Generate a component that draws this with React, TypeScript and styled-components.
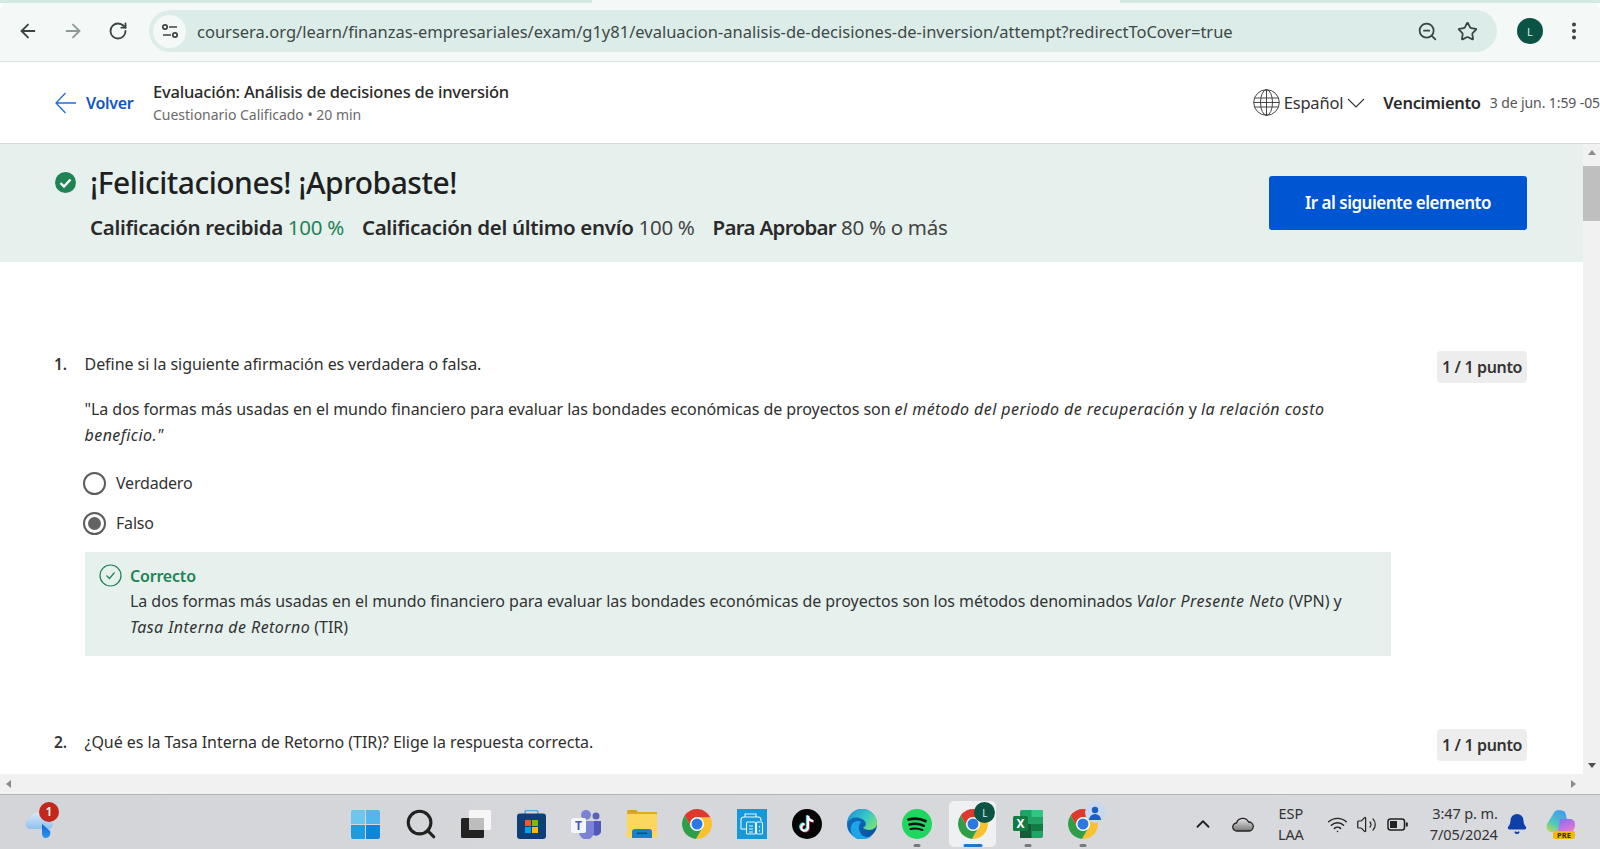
import React from "react";
import styled, { createGlobalStyle } from "styled-components";
import { ArrowLeft, ArrowRight, RotateCw, ZoomOut, Star, EllipsisVertical, ChevronUp, Search, Wifi, Volume2, Bell } from "lucide-react";

const FONT = `"Noto Sans", "Open Sans", sans-serif`;

const GlobalStyle = createGlobalStyle`
  html, body { margin: 0; padding: 0; overflow: hidden; background: #fff; }
  * { box-sizing: border-box; }
  body { font-family: ${FONT}; color: #1f1f1f; }
`;

const Screen = styled.div`
  width: 1600px;
  height: 849px;
  display: flex;
  flex-direction: column;
  overflow: hidden;
`;

const TabStrip = styled.div`
  height: 3px;
  flex: none;
  background: linear-gradient(90deg, #d3eae4 0 37%, #f4f9f8 37% 70%, #d3eae4 70%);
`;

const Toolbar = styled.div`
  height: 59px;
  flex: none;
  display: flex;
  align-items: center;
  padding: 0 12px 2px 5px;
  background: #f4f9f8;
  border-bottom: 1px solid #d9e4e1;
  border-radius: 8px 8px 0 0;
`;

const NavButton = styled.span<{ $muted?: boolean }>`
  width: 45px;
  display: flex;
  justify-content: center;
  color: ${(p) => (p.$muted ? "#8f9a98" : "#3a4442")};
`;

const AddressBar = styled.div`
  width: 1348px;
  height: 42px;
  margin-left: 9px;
  display: flex;
  align-items: center;
  padding: 0 19px 0 4px;
  border-radius: 21px;
  background: #dcece8;
`;

const SiteBadge = styled.span`
  width: 33px;
  height: 33px;
  flex: none;
  display: flex;
  align-items: center;
  justify-content: center;
  border-radius: 50%;
  background: #f4f9f8;
`;

const Url = styled.span`
  flex: 1;
  margin-left: 11px;
  font-size: 16.5px;
  color: #3f4947;
  white-space: nowrap;
`;

const AddressIcons = styled.span`
  display: flex;
  align-items: center;
  gap: 19px;
  color: #3a4442;
`;

const Avatar = styled.span`
  width: 26px;
  height: 26px;
  flex: none;
  display: flex;
  align-items: center;
  justify-content: center;
  border-radius: 50%;
  background: #0b5345;
  color: #d9efe9;
  font-size: 11px;
`;

const ProfileSlot = styled.span`
  margin-left: 20px;
  display: flex;
  align-items: center;
  gap: 20px;
  color: #3a4442;
`;

const PageHeader = styled.header`
  height: 82px;
  flex: none;
  display: flex;
  align-items: center;
  padding: 0 0 0 55px;
  background: #fff;
  border-bottom: 1px solid #d8d8d8;
`;

const BackLink = styled.a`
  display: flex;
  align-items: center;
  gap: 10px;
  width: 98px;
  color: #0f56c4;
  font-size: 16px;
  font-weight: 600;
  letter-spacing: -0.3px;
`;

const HeaderTitle = styled.div`
  flex: 1;
  display: flex;
  flex-direction: column;
  gap: 3px;
`;

const CourseTitle = styled.div`
  font-size: 16.5px;
  font-weight: 500;
  letter-spacing: -0.2px;
  line-height: 22px;
  color: #2a2a2a;
`;

const CourseMeta = styled.div`
  font-size: 14px;
  letter-spacing: -0.02px;
  line-height: 18px;
  color: #6a6a6a;
`;

const HeaderRight = styled.div`
  display: flex;
  align-items: center;
  white-space: nowrap;
`;

const Language = styled.span`
  display: flex;
  align-items: center;
  gap: 4px;
  font-size: 16.5px;
  letter-spacing: -0.2px;
  color: #333;
  margin-right: 18px;
`;

const DueLabel = styled.span`
  font-size: 16.5px;
  font-weight: 600;
  letter-spacing: -0.3px;
  color: #2a2a2a;
`;

const DueValue = styled.span`
  margin-left: 9px;
  font-size: 14px;
  letter-spacing: -0.1px;
  color: #555;
`;

const Body = styled.div`
  flex: 1;
  min-height: 0;
  display: flex;
`;

const Scroller = styled.main`
  flex: 1;
  min-width: 0;
  overflow: hidden;
`;

const VerticalBar = styled.div`
  width: 17px;
  flex: none;
  display: flex;
  flex-direction: column;
  align-items: center;
  justify-content: space-between;
  background: #f1f1f1;
  position: relative;
`;

const Thumb = styled.span`
  position: absolute;
  top: 22px;
  left: 0;
  width: 100%;
  height: 55px;
  background: #bfbfbf;
`;

const Arrow = styled.span<{ $dir: "up" | "down" | "left" | "right" }>`
  width: 0;
  height: 0;
  margin: 6px 0;
  border: 4px solid transparent;
  ${(p) => p.$dir === "up" && "border-bottom: 5px solid #8a8a8a; border-top-width: 0;"}
  ${(p) => p.$dir === "down" && "border-top: 5px solid #505050; border-bottom-width: 0;"}
  ${(p) => p.$dir === "left" && "border-right: 5px solid #8a8a8a; border-left-width: 0;"}
  ${(p) => p.$dir === "right" && "border-left: 5px solid #8a8a8a; border-right-width: 0;"}
`;

const Banner = styled.section`
  height: 118px;
  display: flex;
  align-items: center;
  justify-content: space-between;
  padding: 0 56px 0 55px;
  background: #e6f1ee;
`;

const BannerLeft = styled.div`
  display: flex;
  flex-direction: column;
  gap: 10px;
  margin-bottom: 3px;
`;

const BannerTitle = styled.h1`
  margin: 0;
  display: flex;
  align-items: center;
  gap: 14px;
  font-size: 30px;
  line-height: 40px;
  font-weight: 500;
  letter-spacing: -0.5px;
  color: #1f1f1f;
`;

const Scores = styled.div`
  display: flex;
  gap: 18px;
  padding-left: 35px;
  font-size: 20.5px;
  line-height: 28px;
  letter-spacing: -0.3px;
  color: #444;
`;

const ScoreLabel = styled.b<{ $tight?: boolean }>`
  font-weight: 600;
  letter-spacing: ${(p) => (p.$tight ? "-0.7px" : "-0.32px")};
  color: #2a2a2a;
`;

const ScoreValue = styled.span<{ $good?: boolean }>`
  color: ${(p) => (p.$good ? "#1f8354" : "#444")};
`;

const NextButton = styled.button`
  width: 258px;
  height: 54px;
  padding: 0 0 2px;
  border: none;
  border-radius: 3px;
  background: #0056d2;
  color: #fff;
  font-family: ${FONT};
  font-size: 17px;
  font-weight: 600;
  letter-spacing: -0.5px;
`;

const Quiz = styled.div`
  padding: 89px 56px 0 54px;
  display: flex;
  flex-direction: column;
  gap: 73px;
`;

const Question = styled.article`
  display: grid;
  grid-template-columns: 30.5px 1fr 90px;
`;

const QuestionNumber = styled.div`
  font-size: 15.5px;
  font-weight: 600;
  line-height: 26px;
  color: #333;
`;

const Prompt = styled.div`
  max-width: 1306px;
  font-size: 16px;
  line-height: 26px;
  letter-spacing: -0.05px;
  color: #2f2f2f;

  p {
    margin: 0 0 19px;
  }

  p + p {
    margin-bottom: 23px;
  }

  em {
    letter-spacing: 0.44px;
  }
`;

const Points = styled.div`
  height: 32px;
  display: flex;
  align-items: center;
  justify-content: center;
  border-radius: 4px;
  background: #ededed;
  font-size: 16px;
  font-weight: 600;
  letter-spacing: -0.35px;
  color: #333;
`;

const Option = styled.label`
  display: flex;
  align-items: center;
  gap: 10px;
  height: 24px;
  margin: 0 0 16px -1.5px;
  font-size: 16px;
  letter-spacing: -0.2px;
  color: #333;
`;

const Radio = styled.span<{ $checked?: boolean }>`
  width: 23px;
  height: 23px;
  display: flex;
  align-items: center;
  justify-content: center;
  border-radius: 50%;
  border: 2px solid #5c5c5c;

  &::after {
    content: "";
    display: ${(p) => (p.$checked ? "block" : "none")};
    width: 13px;
    height: 13px;
    border-radius: 50%;
    background: #636363;
  }
`;

const Feedback = styled.div`
  height: 104px;
  margin-top: 17px;
  padding: 12px 40px 0 14.5px;
  display: grid;
  grid-template-columns: 31px 1fr;
  background: #e6f1ee;
`;

const FeedbackTitle = styled.div`
  font-size: 16px;
  font-weight: 600;
  line-height: 24px;
  letter-spacing: -0.2px;
  color: #1f8354;
`;

const FeedbackText = styled.div`
  font-size: 16px;
  line-height: 26px;
  letter-spacing: -0.05px;
  color: #333;
`;

const HorizontalBar = styled.div`
  height: 21px;
  flex: none;
  display: flex;
  align-items: center;
  justify-content: space-between;
  padding: 0 24px 0 6px;
  background: #f1f1f1;
  border-bottom: 1px solid #b5b5b5;
`;

const Taskbar = styled.footer`
  height: 54px;
  flex: none;
  display: flex;
  align-items: center;
  padding: 6px 0 2px 25px;
  background: linear-gradient(90deg, #d4d5d9, #d8dade);
`;

const CloudSlot = styled.span`
  position: relative;
  width: 31px;
  display: flex;
`;

const NotificationDot = styled.span`
  position: absolute;
  top: -9px;
  left: 14px;
  width: 20px;
  height: 20px;
  display: flex;
  align-items: center;
  justify-content: center;
  border-radius: 50%;
  background: #c4281c;
  color: #fff;
  font-size: 12px;
  font-weight: 600;
`;

const AppGroup = styled.div`
  margin-left: 282px;
  display: flex;
  align-items: center;
`;

const AppSlot = styled.span<{ $active?: boolean; $running?: boolean }>`
  position: relative;
  width: 55.2px;
  height: 46px;
  display: flex;
  align-items: center;
  justify-content: center;
  border-radius: 5px;

  &::before {
    content: "";
    display: ${(p) => (p.$active ? "block" : "none")};
    position: absolute;
    inset: 0 4px;
    border-radius: 5px;
    background: #eef0f1;
  }

  & > * {
    position: relative;
  }

  &::after {
    content: "";
    display: ${(p) => (p.$active || p.$running ? "block" : "none")};
    position: absolute;
    bottom: 0;
    left: 50%;
    transform: translateX(-50%);
    width: ${(p) => (p.$active ? 19 : 7)}px;
    height: 3px;
    border-radius: 2px;
    background: ${(p) => (p.$active ? "#1a78d8" : "#77797c")};
  }
`;

const Tray = styled.div`
  margin-left: 77.2px;
  display: flex;
  align-items: center;
  color: #222;
`;

const TrayIcon = styled.span<{ $w: number; $gap?: number }>`
  width: ${(p) => p.$w}px;
  margin-left: ${(p) => p.$gap ?? 0}px;
  display: flex;
  justify-content: center;
`;

const TrayText = styled.div<{ $w: number; $align?: string }>`
  width: ${(p) => p.$w}px;
  font-size: 14.5px;
  line-height: 21px;
  letter-spacing: -0.1px;
  text-align: ${(p) => p.$align ?? "center"};
  color: #333;
`;

const ProfileBubble = styled.span<{ $light?: boolean }>`
  position: absolute !important;
  top: 1px;
  right: 5px;
  width: 21px;
  height: 21px;
  display: flex;
  align-items: center;
  justify-content: center;
  border-radius: 50%;
  background: ${(p) => (p.$light ? "#c9d8ee" : "#0b5345")};
  color: #d9efe9;
  font-size: 10px;
`;

const BackArrow = () => (
  <svg width="21" height="22" viewBox="0 0 21 22" fill="none" stroke="#1f6fd6" strokeWidth="1.3">
    <path d="M10.500 1L1 11L10.500 21M1 11H21" />
  </svg>
);

const GlobeIcon = () => (
  <svg width="27" height="27" viewBox="0 0 27 27" fill="none" stroke="#333" strokeWidth="0.9">
    <circle cx="13.500" cy="13.500" r="12.800" />
    <ellipse cx="13.500" cy="13.500" rx="6" ry="12.800" />
    <path d="M13.500 .7V26.300M1.500 9H25.500M.7 13.500H26.300M1.500 18H25.500" />
  </svg>
);

const ThinChevron = () => (
  <svg width="18" height="10" viewBox="0 0 18 10" fill="none" stroke="#333" strokeWidth="1.100">
    <path d="M1 1L9 9L17 1" />
  </svg>
);

const SiteInfoIcon = () => (
  <svg width="18" height="18" viewBox="0 0 18 18" fill="none" stroke="#3a4442" strokeWidth="1.700">
    <path d="M8 5H16M2 13H10" />
    <circle cx="4" cy="5" r="2.200" />
    <circle cx="14" cy="13" r="2.200" />
  </svg>
);

const PassedIcon = () => (
  <svg width="21" height="21" viewBox="0 0 21 21">
    <circle cx="10.500" cy="10.500" r="10.500" fill="#1f8354" />
    <path d="M5.500 11L9 14.500L15.500 7.500" fill="none" stroke="#fff" strokeWidth="2.400" />
  </svg>
);

const OutlineCheck = () => (
  <svg width="23" height="23" viewBox="0 0 23 23" fill="none" stroke="#1f8354">
    <circle cx="11.500" cy="11.500" r="10.500" strokeWidth="1.200" />
    <path d="M7.500 11.500L10.500 14.500L15.500 8.500" strokeWidth="1.200" />
  </svg>
);

const OneDriveAlert = () => (
  <svg width="31" height="27" viewBox="0 0 31 27">
    <defs>
      <linearGradient id="cloudFill" x1="0" y1="0" x2="0" y2="1">
        <stop offset="0" stopColor="#d8e8f8" />
        <stop offset="1" stopColor="#8fc0ee" />
      </linearGradient>
      <linearGradient id="dropFill" x1="0" y1="0" x2="0" y2="1">
        <stop offset="0" stopColor="#0f5fd0" />
        <stop offset="1" stopColor="#2b9bf4" />
      </linearGradient>
    </defs>
    <path d="M6 18a5 5 0 0 1-1-10 9 9 0 0 1 17-1 6 6 0 0 1 3 11Z" fill="url(#cloudFill)" />
    <path d="M17 13l8 7c1 4-1 7-4 7s-4-2-4-5Z" fill="url(#dropFill)" />
  </svg>
);

const StartIcon = () => (
  <svg width="29" height="29" viewBox="0 0 29 29">
    <path d="M0 2a2 2 0 0 1 2-2H14V14H0Z" fill="#6cc6ee" />
    <path d="M15 0H27a2 2 0 0 1 2 2V14H15Z" fill="#54b6ea" />
    <path d="M0 15H14V29H2a2 2 0 0 1-2-2Z" fill="#1f9be0" />
    <path d="M15 15H29V27a2 2 0 0 1-2 2H15Z" fill="#0f86d8" />
  </svg>
);

const TaskViewIcon = () => (
  <svg width="30" height="28" viewBox="0 0 30 28">
    <rect x="8" y="0" width="22" height="20" rx="1.500" fill="#f6f6f6" />
    <rect x="0" y="8" width="23" height="20" rx="1.500" fill="#222" />
    <rect x="8" y="8" width="15" height="12" fill="#bdbdbd" />
  </svg>
);

const StoreIcon = () => (
  <svg width="29" height="29" viewBox="0 0 29 29">
    <path d="M8 5V2.500a2 2 0 0 1 2-2h9a2 2 0 0 1 2 2V5" fill="none" stroke="#4aa9e0" strokeWidth="1.500" />
    <rect x="0" y="3.500" width="29" height="25.500" rx="3" fill="#0f3f78" />
    <rect x="8" y="10" width="6" height="6" fill="#f05a28" />
    <rect x="15" y="10" width="6" height="6" fill="#7fba00" />
    <rect x="8" y="17" width="6" height="6" fill="#00a4ef" />
    <rect x="15" y="17" width="6" height="6" fill="#ffb900" />
  </svg>
);

const TeamsIcon = () => (
  <svg width="30" height="29" viewBox="0 0 30 29">
    <circle cx="15" cy="5" r="5" fill="#7b83d6" />
    <circle cx="25" cy="6" r="3.500" fill="#5a62c0" />
    <path d="M20 11h10v8a5 5 0 0 1-10 3Z" fill="#5059b8" />
    <path d="M8 11h15v11a7 7 0 0 1-15 0Z" fill="#7b83d6" />
    <rect x="0" y="8" width="15" height="15" rx="2" fill="#f4f6ff" />
    <text x="7.500" y="20" textAnchor="middle" fontSize="12" fontWeight="700" fontFamily={FONT} fill="#4b53bc">T</text>
  </svg>
);

const FolderIcon = () => (
  <svg width="30" height="28" viewBox="0 0 30 28">
    <path d="M0 2a2 2 0 0 1 2-2h7l3 3H0Z" fill="#d4a017" />
    <rect x="0" y="2" width="30" height="4" fill="#e0ab1a" />
    <rect x="0" y="4" width="30" height="24" rx="1" fill="#fbd75b" />
    <path d="M5 28v-6a3 3 0 0 1 3-3h14a3 3 0 0 1 3 3v6Z" fill="#1d7fc4" />
    <rect x="10" y="22.500" width="10" height="1.600" fill="#0d4e80" />
  </svg>
);

const ChromeIcon = () => (
  <svg width="30" height="30" viewBox="1 1 30 30">
    <path d="M16 16L10.370 19.250L3.620 7.560A15 15 0 0 1 29.500 9.500L16 9.500Z" fill="#dd3a2d" />
    <path d="M16 16L16 9.500L29.500 9.500A15 15 0 0 1 14.880 30.940L21.630 19.250Z" fill="#fbc02d" />
    <path d="M16 16L21.630 19.250L14.880 30.940A15 15 0 0 1 3.620 7.560L10.370 19.250Z" fill="#2f9e48" />
    <circle cx="16" cy="16" r="7" fill="#fff" />
    <circle cx="16" cy="16" r="5.500" fill="#2a78e0" />
  </svg>
);

const PrinterIcon = () => (
  <svg width="30" height="30" viewBox="0 0 30 30">
    <rect width="30" height="30" fill="#1798da" />
    <g fill="none" stroke="#e4f6ff" strokeWidth="1.100">
      <path d="M8 8V5h11v3M4 20v-9a3 3 0 0 1 3-3h14a3 3 0 0 1 3 3v1" />
      <path d="M4 20h5" />
      <rect x="9.500" y="13" width="9" height="12" rx="1" />
      <rect x="19.500" y="13" width="6" height="12" rx="1" />
      <path d="M12 17h4M12 20h4M12 23h4M22.500 17v1.500M22.500 21v1.500" />
    </g>
  </svg>
);

const TikTokIcon = () => (
  <svg width="30" height="30" viewBox="0 0 31 31">
    <circle cx="15.500" cy="15.500" r="15.500" fill="#050505" />
    <path d="M16.500 7v12a3.500 3.500 0 1 1-3.500-3.500M16.500 7c.3 3 2 5 5.500 5.500" fill="none" stroke="#25e4e0" strokeWidth="2.400" transform="translate(-1 -.6)" />
    <path d="M16.500 7v12a3.500 3.500 0 1 1-3.500-3.500M16.500 7c.3 3 2 5 5.500 5.500" fill="none" stroke="#fe2c55" strokeWidth="2.400" transform="translate(.6 .6)" />
    <path d="M16.500 7v12a3.500 3.500 0 1 1-3.500-3.500M16.500 7c.3 3 2 5 5.500 5.500" fill="none" stroke="#fff" strokeWidth="2.200" />
  </svg>
);

const EdgeIcon = () => (
  <svg width="30" height="30" viewBox="0 0 30 30">
    <defs>
      <linearGradient id="edgeTop" x1="0" y1="0" x2="1" y2="0.600">
        <stop offset="0" stopColor="#1a8fd8" />
        <stop offset="0.600" stopColor="#35c6c8" />
        <stop offset="1" stopColor="#6fe07f" />
      </linearGradient>
      <linearGradient id="edgeBase" x1="0" y1="0" x2="1" y2="1">
        <stop offset="0" stopColor="#0f72c4" />
        <stop offset="1" stopColor="#0a4f9e" />
      </linearGradient>
    </defs>
    <circle cx="15" cy="15" r="15" fill="url(#edgeBase)" />
    <path d="M.5 13C2 5 8 0 15 0c8 0 15 6 15 14 0 4-3 7-8 7-3 0-5-1-6-2.500 3-1 3.500-3.500 2-6C15.500 8 5 6 .5 13Z" fill="url(#edgeTop)" />
    <path d="M10 30C4 27 2 20 5 15c2-3 7-4 9-2-3 3-3 9 1 13 3 2.500 7 2.500 10 1-4 3-10 4.500-15 3Z" fill="#1ea3e6" />
  </svg>
);

const SpotifyIcon = () => (
  <svg width="30" height="30" viewBox="0 0 30 30" fill="none" stroke="#111" strokeLinecap="round">
    <circle cx="15" cy="15" r="15" fill="#1ed760" stroke="none" />
    <path d="M6.500 10.500c5.500-1.500 11.500-1.200 17 1.500" strokeWidth="2.800" />
    <path d="M7.500 15.500c5-1.200 10-.8 14.500 1.300" strokeWidth="2.400" />
    <path d="M8.500 20c4-1 8-.6 12 1" strokeWidth="2.100" />
  </svg>
);

const ExcelIcon = () => (
  <svg width="30" height="28" viewBox="0 0 30 28">
    <rect x="7" y="0" width="23" height="28" rx="2" fill="#21a366" />
    <rect x="18.500" y="0" width="11.500" height="7" fill="#33c481" />
    <rect x="7" y="14" width="11.500" height="14" fill="#185c37" />
    <rect x="18.500" y="14" width="11.500" height="7" fill="#107c41" />
    <rect x="0" y="6" width="15" height="15" rx="1.500" fill="#107c41" />
    <text x="7.500" y="18" textAnchor="middle" fontSize="12" fontWeight="700" fontFamily={FONT} fill="#fff">X</text>
  </svg>
);

const PersonGlyph = () => (
  <svg width="14" height="14" viewBox="0 0 14 14" fill="#1a5fc4">
    <circle cx="7" cy="4" r="3.200" />
    <path d="M1 14a6 6 0 0 1 12 0Z" />
  </svg>
);

const TrayCloud = () => (
  <svg width="22" height="16" viewBox="0 0 22 16" stroke="#222" strokeWidth="1.300">
    <defs>
      <linearGradient id="trayCloud" x1="0" y1="0" x2="0" y2="1">
        <stop offset="0" stopColor="#e6e6e6" />
        <stop offset="1" stopColor="#777" />
      </linearGradient>
    </defs>
    <path d="M5 15a4 4 0 0 1-.5-8A6.500 6.500 0 0 1 16.500 6a4.500 4.500 0 0 1 .5 9Z" fill="url(#trayCloud)" />
  </svg>
);

const BatteryIcon = () => (
  <svg width="21" height="13" viewBox="0 0 21 13" fill="none" stroke="#222" strokeWidth="1.500">
    <rect x="1" y="1" width="16.500" height="11" rx="2.500" />
    <rect x="3" y="3" width="7" height="7" fill="#222" stroke="none" />
    <path d="M19.800 4.500v4" strokeWidth="2" />
  </svg>
);

const CopilotIcon = () => (
  <svg width="30" height="29" viewBox="0 0 30 29">
    <defs>
      <linearGradient id="copilotLeft" x1="0.700" y1="0" x2="0.200" y2="1">
        <stop offset="0" stopColor="#3f9cf0" />
        <stop offset="0.600" stopColor="#4fc6c0" />
        <stop offset="1" stopColor="#b5d94f" />
      </linearGradient>
      <linearGradient id="copilotRight" x1="0.200" y1="0" x2="0.800" y2="1">
        <stop offset="0" stopColor="#8a6cf0" />
        <stop offset="1" stopColor="#ee7ad0" />
      </linearGradient>
    </defs>
    <path d="M9 1c2-1 8-1 10 1l2 7-8 13H5C1 22 0 17 1 14Z" fill="url(#copilotLeft)" />
    <path d="M14 9h9c4 0 6 2 6 5 0 5-2 8-6 8H12Z" fill="url(#copilotRight)" />
    <rect x="7" y="21" width="22" height="8" rx="2" fill="#f2b711" />
    <text x="18" y="27.800" textAnchor="middle" fontSize="7.500" fontWeight="700" fontFamily={FONT} fill="#3a2c00">PRE</text>
  </svg>
);

export default function App() {
  return (
    <Screen>
      <GlobalStyle />
      <TabStrip />
      <Toolbar>
        <NavButton><ArrowLeft size={22} strokeWidth={2} /></NavButton>
        <NavButton $muted><ArrowRight size={22} strokeWidth={2} /></NavButton>
        <NavButton><RotateCw size={20} strokeWidth={2.2} /></NavButton>
        <AddressBar>
          <SiteBadge><SiteInfoIcon /></SiteBadge>
          <Url>coursera.org/learn/finanzas-empresariales/exam/g1y81/evaluacion-analisis-de-decisiones-de-inversion/attempt?redirectToCover=true</Url>
          <AddressIcons>
            <ZoomOut size={21} strokeWidth={2} />
            <Star size={21} strokeWidth={2} />
          </AddressIcons>
        </AddressBar>
        <ProfileSlot>
          <Avatar>L</Avatar>
          <EllipsisVertical size={22} strokeWidth={2.4} />
        </ProfileSlot>
      </Toolbar>

      <PageHeader>
        <BackLink><BackArrow />Volver</BackLink>
        <HeaderTitle>
          <CourseTitle>Evaluación: Análisis de decisiones de inversión</CourseTitle>
          <CourseMeta>Cuestionario Calificado • 20 min</CourseMeta>
        </HeaderTitle>
        <HeaderRight>
          <Language>
            <GlobeIcon />
            Español
            <ThinChevron />
          </Language>
          <DueLabel>Vencimiento</DueLabel>
          <DueValue>3 de jun. 1:59 -05</DueValue>
        </HeaderRight>
      </PageHeader>

      <Body>
        <Scroller>
          <Banner>
            <BannerLeft>
              <BannerTitle><PassedIcon />¡Felicitaciones! ¡Aprobaste!</BannerTitle>
              <Scores>
                <span><ScoreLabel>Calificación recibida</ScoreLabel> <ScoreValue $good>100 %</ScoreValue></span>
                <span><ScoreLabel>Calificación del último envío</ScoreLabel> <ScoreValue>100 %</ScoreValue></span>
                <span><ScoreLabel $tight>Para Aprobar</ScoreLabel> <ScoreValue>80 % o más</ScoreValue></span>
              </Scores>
            </BannerLeft>
            <NextButton>Ir al siguiente elemento</NextButton>
          </Banner>

          <Quiz>
            <Question>
              <QuestionNumber>1.</QuestionNumber>
              <Prompt>
                <p>Define si la siguiente afirmación es verdadera o falsa.</p>
                <p>"La dos formas más usadas en el mundo financiero para evaluar las bondades económicas de proyectos son <em>el método del periodo de recuperación</em> y <em>la relación costo beneficio."</em></p>
                <Option><Radio />Verdadero</Option>
                <Option><Radio $checked />Falso</Option>
                <Feedback>
                  <OutlineCheck />
                  <div>
                    <FeedbackTitle>Correcto</FeedbackTitle>
                    <FeedbackText>La dos formas más usadas en el mundo financiero para evaluar las bondades económicas de proyectos son los métodos denominados <em>Valor Presente Neto</em> (VPN) y <em>Tasa Interna de Retorno</em> (TIR)</FeedbackText>
                  </div>
                </Feedback>
              </Prompt>
              <Points>1 / 1 punto</Points>
            </Question>
            <Question>
              <QuestionNumber>2.</QuestionNumber>
              <Prompt>¿Qué es la Tasa Interna de Retorno (TIR)? Elige la respuesta correcta.</Prompt>
              <Points>1 / 1 punto</Points>
            </Question>
          </Quiz>
        </Scroller>
        <VerticalBar>
          <Arrow $dir="up" />
          <Thumb />
          <Arrow $dir="down" />
        </VerticalBar>
      </Body>

      <HorizontalBar>
        <Arrow $dir="left" />
        <Arrow $dir="right" />
      </HorizontalBar>

      <Taskbar>
        <CloudSlot>
          <OneDriveAlert />
          <NotificationDot>1</NotificationDot>
        </CloudSlot>
        <AppGroup>
          <AppSlot><StartIcon /></AppSlot>
          <AppSlot><Search size={34} strokeWidth={2.2} color="#222" /></AppSlot>
          <AppSlot><TaskViewIcon /></AppSlot>
          <AppSlot><StoreIcon /></AppSlot>
          <AppSlot><TeamsIcon /></AppSlot>
          <AppSlot><FolderIcon /></AppSlot>
          <AppSlot><ChromeIcon /></AppSlot>
          <AppSlot><PrinterIcon /></AppSlot>
          <AppSlot><TikTokIcon /></AppSlot>
          <AppSlot><EdgeIcon /></AppSlot>
          <AppSlot $running><SpotifyIcon /></AppSlot>
          <AppSlot $active><ChromeIcon /><ProfileBubble>L</ProfileBubble></AppSlot>
          <AppSlot $running><ExcelIcon /></AppSlot>
          <AppSlot $running><ChromeIcon /><ProfileBubble $light><PersonGlyph /></ProfileBubble></AppSlot>
        </AppGroup>
        <Tray>
          <TrayIcon $w={30}><ChevronUp size={22} strokeWidth={2} /></TrayIcon>
          <TrayIcon $w={50}><TrayCloud /></TrayIcon>
          <TrayText $w={46}>ESP<br />LAA</TrayText>
          <TrayIcon $w={30} $gap={9}><Wifi size={21} strokeWidth={1.7} /></TrayIcon>
          <TrayIcon $w={28}><Volume2 size={21} strokeWidth={1.4} /></TrayIcon>
          <TrayIcon $w={34}><BatteryIcon /></TrayIcon>
          <TrayText $w={83} $align="right">3:47 p. m.<br />7/05/2024</TrayText>
          <TrayIcon $w={39}><Bell size={22} fill="#0f3fa8" color="#0f3fa8" /></TrayIcon>
          <TrayIcon $w={48}><CopilotIcon /></TrayIcon>
        </Tray>
      </Taskbar>
    </Screen>
  );
}
